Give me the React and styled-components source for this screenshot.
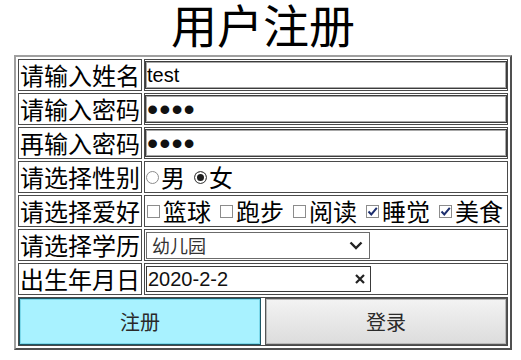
import React from 'react';
import styled, { createGlobalStyle } from 'styled-components';

const GlobalStyle = createGlobalStyle`
	body {
		margin: 0;
		background: #fff;
		color: #000;
		font-family: "Noto Sans CJK SC", sans-serif;
	}
`;

const Page = styled.div`
	width: 498px;
	margin-left: 14px;
`;

const Title = styled.h1`
	margin: 0 0 9px;
	font-size: 46px;
	line-height: 46px;
	font-weight: 400;
	text-align: center;
`;

/**
 * Table
 */

const FormTable = styled.table`
	width: 498px;
	border-collapse: separate;
	border-spacing: 2px;
	border: 2px solid;
	border-color: #a0a0a0 #505050 #505050 #a0a0a0;
`;

const Label = styled.td`
	width: 120px;
	padding: 0 1px;
	border: 1px solid #4a4a4a;
	font-size: 24px;
	line-height: 30px;
	white-space: nowrap;
`;

const Field = styled.td`
	padding: 0;
	border: 1px solid #4a4a4a;
	vertical-align: middle;
`;

const TextInput = styled.input`
	display: block;
	box-sizing: border-box;
	width: 100%;
	height: 28px;
	margin: 0;
	padding: 0 1px;
	border: 1px solid #3c3c3c;
	box-shadow: inset 0 0 0 1px #a8a8a8;
	background: #fff;
	color: #000;
	font: 20px "Liberation Sans", sans-serif;
	outline: none;
	${({ type }) => type === 'password' && 'font-size: 32px; letter-spacing: 1px; color: #111;'}
`;

/**
 * Radio / checkbox
 */

const Options = styled.div`
	display: flex;
	align-items: center;
	gap: ${({ $gap }) => $gap}px;
	font-size: 24px;
	line-height: 30px;
	white-space: nowrap;
`;

const Option = styled.label`
	display: inline-flex;
	align-items: center;
`;

const Radio = styled.span`
	width: 13px;
	height: 13px;
	box-sizing: border-box;
	margin: 0 2px 0 1px;
	border-radius: 50%;
	border: 1px solid ${({ $checked }) => ($checked ? '#4d4d4d' : '#8c8c8c')};
	background: ${({ $checked }) => ($checked ? '#1e1e1e' : '#fff')};
	box-shadow: ${({ $checked }) => ($checked ? 'inset 0 0 0 2px #fff' : 'none')};
`;

const CheckBox = styled.span`
	display: inline-flex;
	width: 13px;
	height: 13px;
	box-sizing: border-box;
	margin: 0 3px 0 2px;
	border: 1px solid #8c8c8c;
	background: #fff;
	svg {
		display: block;
	}
`;

const Check = ({ checked }) => (
	<CheckBox>
		{checked && (
			<svg width="11" height="11" viewBox="0 0 11 11">
				<path d="M1.5 5.5 L4.3 8.5 L9.8 1.8" fill="none" stroke="#1c2e6e" strokeWidth="2" />
			</svg>
		)}
	</CheckBox>
);

/**
 * Select / date
 */

const Box = styled.div`
	display: flex;
	align-items: center;
	justify-content: space-between;
	box-sizing: border-box;
	width: ${({ $w }) => $w}px;
	height: ${({ $h }) => $h}px;
	margin-left: 1px;
	background: #fff;
	border: 1px solid ${({ $dark }) => ($dark ? '#3a3a3a' : '#6b6b6b')};
`;

const SelectText = styled.span`
	padding-left: 5px;
	font-size: 18px;
	color: #333;
`;

const DateText = styled.span`
	padding-left: 1px;
	font: 20px "Liberation Sans", sans-serif;
	color: #111;
`;

const BoxIcon = styled.svg`
	margin-right: ${({ $mr }) => $mr}px;
`;

/**
 * Buttons
 */

const ButtonRow = styled.div`
	display: flex;
	gap: 4px;
`;

const Button = styled.button`
	flex: 1;
	height: 47px;
	box-sizing: border-box;
	margin: 0;
	font: 20px "Noto Sans CJK SC", sans-serif;
	color: #2a2a2a;
	border: 1px solid ${({ $primary }) => ($primary ? '#1d5664' : '#555')};
	background: ${({ $primary }) => ($primary ? '#a8f2ff' : 'linear-gradient(#f3f3f3, #dcdcdc)')};
	box-shadow: inset 0 0 0 1px ${({ $primary }) => ($primary ? '#7bd8ea' : '#b8b8b8')};
`;

const hobbies = [
	{ name: '篮球', checked: false },
	{ name: '跑步', checked: false },
	{ name: '阅读', checked: false },
	{ name: '睡觉', checked: true },
	{ name: '美食', checked: true },
];

const App = () => {
	return (
		<Page>
			<GlobalStyle />
			<Title>用户注册</Title>
			<FormTable>
				<tbody>
					<tr>
						<Label>请输入姓名</Label>
						<Field>
							<TextInput type="text" defaultValue="test" />
						</Field>
					</tr>
					<tr>
						<Label>请输入密码</Label>
						<Field>
							<TextInput type="password" defaultValue="1234" />
						</Field>
					</tr>
					<tr>
						<Label>再输入密码</Label>
						<Field>
							<TextInput type="password" defaultValue="1234" />
						</Field>
					</tr>
					<tr>
						<Label>请选择性别</Label>
						<Field>
							<Options $gap={8}>
								<Option>
									<Radio />男
								</Option>
								<Option>
									<Radio $checked />女
								</Option>
							</Options>
						</Field>
					</tr>
					<tr>
						<Label>请选择爱好</Label>
						<Field>
							<Options $gap={7}>
								{hobbies.map((h) => (
									<Option key={h.name}>
										<Check checked={h.checked} />
										{h.name}
									</Option>
								))}
							</Options>
						</Field>
					</tr>
					<tr>
						<Label>请选择学历</Label>
						<Field>
							<Box $w={224} $h={27}>
								<SelectText>幼儿园</SelectText>
								<BoxIcon $mr={6} width="14" height="9" viewBox="0 0 14 9">
									<path d="M1.5 1.5 L7 7 L12.5 1.5" fill="none" stroke="#222" strokeWidth="2.4" />
								</BoxIcon>
							</Box>
						</Field>
					</tr>
					<tr>
						<Label>出生年月日</Label>
						<Field>
							<Box $w={225} $h={26} $dark>
								<DateText>2020-2-2</DateText>
								<BoxIcon $mr={5} width="10" height="10" viewBox="0 0 10 10">
									<path d="M1 1 L9 9 M9 1 L1 9" fill="none" stroke="#222" strokeWidth="2.2" />
								</BoxIcon>
							</Box>
						</Field>
					</tr>
					<tr>
						<Field colSpan={2}>
							<ButtonRow>
								<Button $primary>注册</Button>
								<Button>登录</Button>
							</ButtonRow>
						</Field>
					</tr>
				</tbody>
			</FormTable>
		</Page>
	);
};

export default App;
